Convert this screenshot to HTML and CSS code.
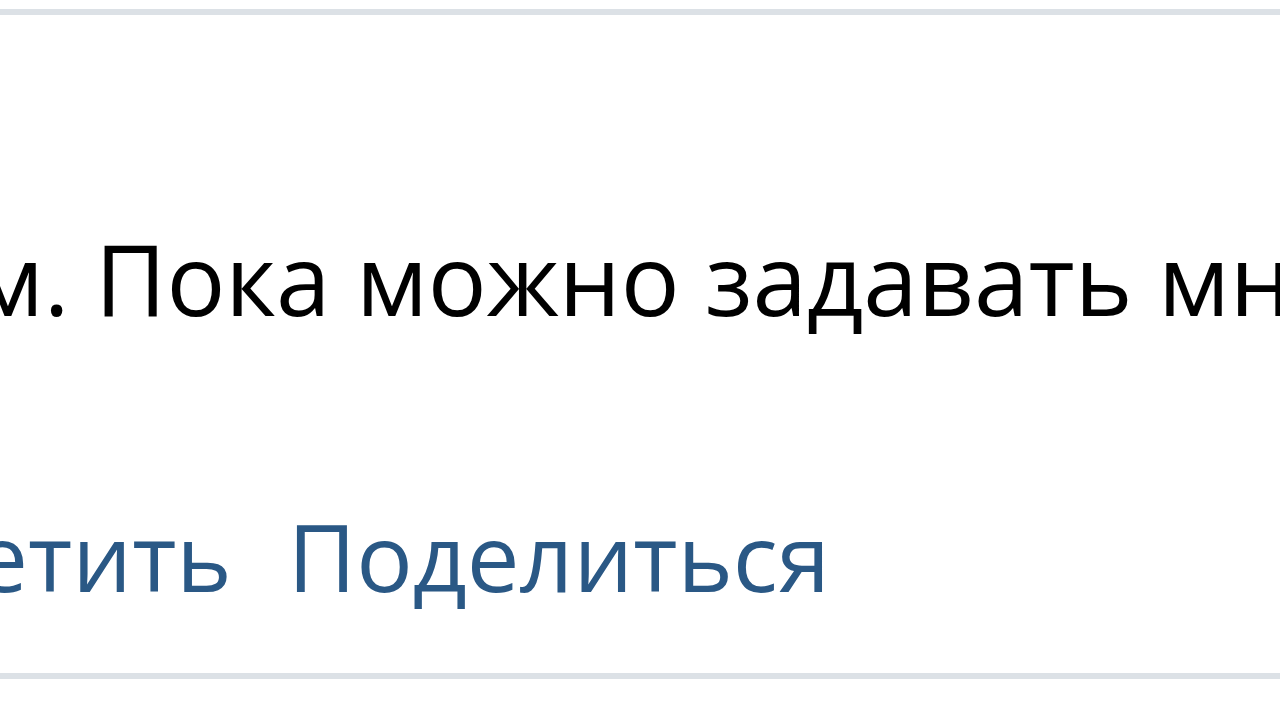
FILE: index.html
```html
<!DOCTYPE html>
<html lang="ru">
<head>
  <meta charset="UTF-8">
  <title>Комментарий</title>
  <link rel="stylesheet" href="styles.css">
</head>
<body>
  <div class="reply">
    <div class="divider"></div>

    <!-- Reply text -->
    <div class="reply-text">м. Пока можно задавать много вопросов</div>

    <!-- Reply actions -->
    <div class="reply-actions">
      <a class="action" href="#">Ответить</a>
      <a class="action" href="#">Поделиться</a>
    </div>

    <div class="divider"></div>
  </div>
</body>
</html>
```

FILE: styles.css
```css
body {
  margin: 0;
  background: #fff;
  font-family: "Open Sans", "Liberation Sans", Arial, sans-serif;
  overflow: hidden;
}

.reply {
  width: 1280px;
  height: 720px;
  overflow: hidden;
  padding-top: 9px;
  box-sizing: border-box;
}

.divider {
  height: 6px;
  background: #dce1e6;
}

.reply-text {
  margin-top: 196px;
  margin-left: -28px;
  font-size: 98px;
  line-height: 134px;
  color: #000;
  white-space: nowrap;
}

.reply-actions {
  margin-top: 147px;
  margin-left: -196px;
  font-size: 94px;
  line-height: 128px;
  white-space: nowrap;
  display: flex;
  gap: 56px;
}

.action {
  color: #2a5885;
  text-decoration: none;
}

.reply-actions + .divider {
  margin-top: 53px;
}
```
